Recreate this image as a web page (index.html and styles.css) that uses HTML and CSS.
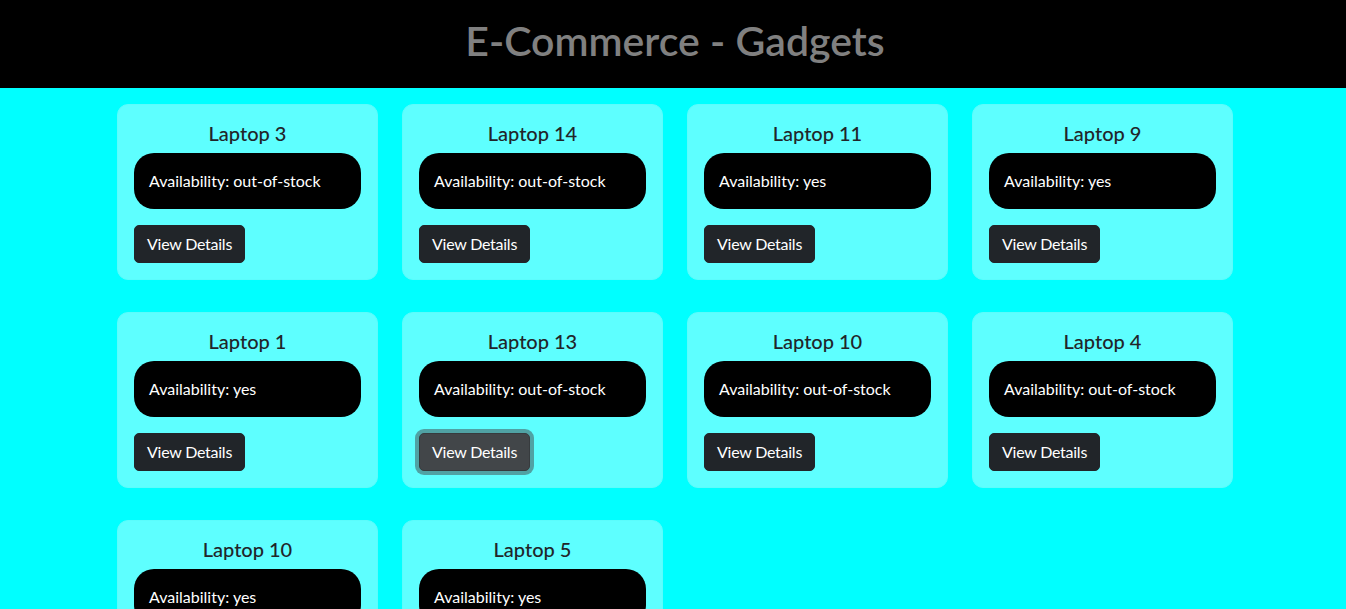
FILE: index.html
```html
<!DOCTYPE html>
<html lang="en">
<head>
<meta charset="utf-8">
<title>E-Commerce - Gadgets</title>
<link rel="stylesheet" href="styles.css">
</head>
<body>
<div class="page">
  <header class="topbar">
    <h1 class="title">E-Commerce - Gadgets</h1>
  </header>
  <main class="grid">
    <div class="card"><h5 class="card-title">Laptop 3</h5><p class="avail">Availability: out-of-stock</p><button class="btn">View Details</button></div>
    <div class="card"><h5 class="card-title">Laptop 14</h5><p class="avail">Availability: out-of-stock</p><button class="btn">View Details</button></div>
    <div class="card"><h5 class="card-title">Laptop 11</h5><p class="avail">Availability: yes</p><button class="btn">View Details</button></div>
    <div class="card"><h5 class="card-title">Laptop 9</h5><p class="avail">Availability: yes</p><button class="btn">View Details</button></div>
    <div class="card"><h5 class="card-title">Laptop 1</h5><p class="avail">Availability: yes</p><button class="btn">View Details</button></div>
    <div class="card"><h5 class="card-title">Laptop 13</h5><p class="avail">Availability: out-of-stock</p><button class="btn btn-focus">View Details</button></div>
    <div class="card"><h5 class="card-title">Laptop 10</h5><p class="avail">Availability: out-of-stock</p><button class="btn">View Details</button></div>
    <div class="card"><h5 class="card-title">Laptop 4</h5><p class="avail">Availability: out-of-stock</p><button class="btn">View Details</button></div>
    <div class="card"><h5 class="card-title">Laptop 10</h5><p class="avail">Availability: yes</p><button class="btn">View Details</button></div>
    <div class="card"><h5 class="card-title">Laptop 5</h5><p class="avail">Availability: yes</p><button class="btn">View Details</button></div>
  </main>
</div>
</body>
</html>
```
FILE: styles.css
```css
* { box-sizing: border-box; }
html, body {
  margin: 0;
  padding: 0;
  background: #00ffff;
  font-family: "Lato", "Noto Sans", sans-serif;
  color: #212529;
}
.page {
  padding-left: 4px;
  overflow: hidden;
  height: 609px;
}
.topbar {
  background: #000;
  height: 88px;
  margin-left: -4px;
  padding: 0 0 6px 4px;
  display: flex;
  align-items: center;
  justify-content: center;
}
.title {
  margin: 0;
  color: #808080;
  font-size: 41px;
  font-weight: 600;
  line-height: 1.2;
}
.grid {
  width: 1116px;
  margin: 16px auto 0;
  display: grid;
  grid-template-columns: repeat(4, 261px);
  column-gap: 24px;
  row-gap: 32px;
}
.card {
  background: #5effff;
  border: 1px solid #5cfcfc;
  border-radius: 11px;
  padding: 16px;
  height: 176px;
  display: flex;
  flex-direction: column;
  align-items: flex-start;
}
.card-title {
  align-self: stretch;
  text-align: center;
  margin: 0 0 8px;
  font-size: 20px;
  font-weight: 500;
  line-height: 24px;
  color: #212529;
}
.avail {
  align-self: stretch;
  margin: 0 0 16px;
  background: #000;
  color: #fff;
  border-radius: 20px;
  padding: 16px 15px;
  font-size: 16px;
  line-height: 24px;
}
.btn {
  font-family: inherit;
  font-size: 16px;
  line-height: 24px;
  letter-spacing: -0.25px;
  padding: 6px 12px;
  background: #212529;
  color: #fff;
  border: 1px solid #212529;
  border-radius: 5px;
  cursor: pointer;
}
.btn-focus {
  background: #424649;
  border-color: #373b3e;
  box-shadow: 0 0 0 4px rgba(66, 70, 73, 0.5);
}
```
